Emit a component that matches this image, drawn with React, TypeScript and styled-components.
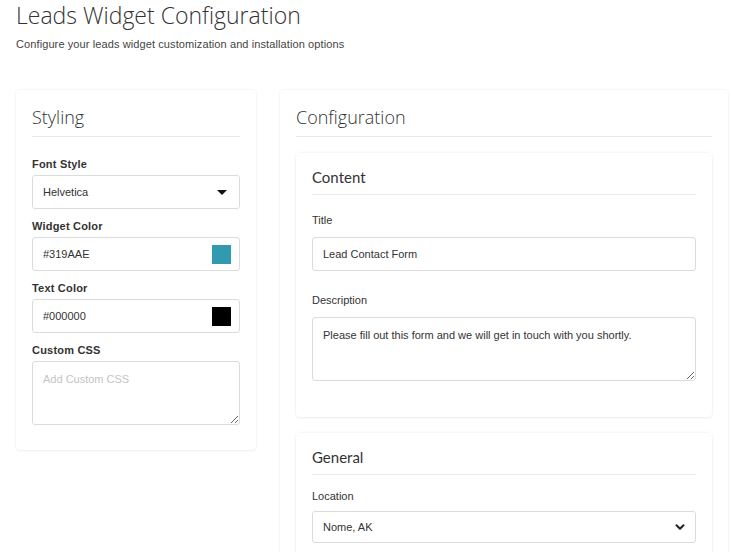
import React from 'react';
import styled, { createGlobalStyle } from 'styled-components';
import { ChevronDown } from 'lucide-react';

const GlobalStyle = createGlobalStyle`
  body {
    margin: 0;
    background: #fff;
    font-family: 'Liberation Sans', Arial, sans-serif;
    color: #333;
  }
`;

const Page = styled.div`
  padding: 0 4px 0 16px;
`;

const PageTitle = styled.h1`
  margin: 0;
  padding-top: 2px;
  font-family: 'Open Sans', sans-serif;
  font-weight: 300;
  font-size: 23px;
  line-height: 26px;
  color: #333;
`;

const PageSubtitle = styled.p`
  margin: 9px 0 0;
  font-size: 11px;
  line-height: 14px;
  letter-spacing: 0.1px;
  color: #444;
`;

const Columns = styled.div`
  display: flex;
  align-items: flex-start;
  gap: 24px;
  margin-top: 39px;
`;

const Card = styled.section<{ $width?: number; $open?: boolean }>`
  background: #fff;
  border-radius: 4px;
  box-shadow: 0 0 3px rgba(0, 0, 0, 0.08), 0 1px 2px rgba(0, 0, 0, 0.04);
  padding: 16px 16px ${(p) => (p.$open ? '0' : '25px')};
  ${(p) => (p.$width ? `width: ${p.$width}px;` : 'flex: 1;')}
  box-sizing: border-box;
  ${(p) => (p.$open ? 'min-height: 480px;' : '')}
`;

const SubCard = styled.section`
  background: #fff;
  border-radius: 4px;
  box-shadow: 0 0 3px rgba(0, 0, 0, 0.09), 0 1px 2px rgba(0, 0, 0, 0.04);
  padding: 16px 16px 14px;
  margin-bottom: 16px;
`;

const CardTitle = styled.h2`
  margin: 0;
  padding-bottom: 8px;
  border-bottom: 1px solid #eaeaea;
  font-family: 'Open Sans', sans-serif;
  font-weight: 300;
  font-size: 18px;
  line-height: 22px;
  color: #333;
`;

const SubTitle = styled.h3`
  margin: 0;
  padding-bottom: 8px;
  border-bottom: 1px solid #eaeaea;
  font-family: 'Lato', sans-serif;
  font-weight: 400;
  font-size: 15px;
  line-height: 17px;
  color: #333;
`;

const Fields = styled.div<{ $top: number }>`
  margin-top: ${(p) => p.$top}px;
`;

const Group = styled.div<{ $gap: number }>`
  margin-bottom: ${(p) => p.$gap}px;
  &:last-child {
    margin-bottom: 0;
  }
`;

const Label = styled.label<{ $bold?: boolean; $gap: number }>`
  display: block;
  font-size: 11px;
  line-height: 14px;
  font-weight: ${(p) => (p.$bold ? 700 : 400)};
  letter-spacing: ${(p) => (p.$bold ? '0.2px' : '0')};
  color: #333;
  margin-bottom: ${(p) => p.$gap}px;
`;

const Box = styled.div<{ $height?: number }>`
  position: relative;
  display: flex;
  align-items: center;
  justify-content: space-between;
  height: ${(p) => p.$height ?? 34}px;
  box-sizing: border-box;
  border: 1px solid #dcdcdc;
  border-radius: 3px;
  padding: 0 8px 0 10px;
  font-size: 11px;
  color: #333;
  background: #fff;
`;

const TextInput = styled.input`
  display: block;
  width: 100%;
  height: 34px;
  box-sizing: border-box;
  border: 1px solid #dcdcdc;
  border-radius: 3px;
  padding: 0 10px;
  font-family: 'Liberation Sans', Arial, sans-serif;
  font-size: 11px;
  color: #333;
  outline: none;
  flex: 1;
`;

const BareInput = styled.input`
  border: none;
  outline: none;
  padding: 0;
  flex: 1;
  font-family: 'Liberation Sans', Arial, sans-serif;
  font-size: 11px;
  color: #333;
  background: transparent;
`;

const TextArea = styled.textarea`
  display: block;
  width: 100%;
  height: 64px;
  box-sizing: border-box;
  border: 1px solid #dcdcdc;
  border-radius: 3px;
  padding: 10px 10px;
  font-family: 'Liberation Sans', Arial, sans-serif;
  font-size: 11px;
  line-height: 14px;
  color: #333;
  outline: none;
  resize: vertical;
  &::placeholder {
    color: #c4c4c4;
  }
`;

const Swatch = styled.span<{ $color: string }>`
  width: 19px;
  height: 19px;
  background: ${(p) => p.$color};
`;

const Caret = styled.span`
  width: 0;
  height: 0;
  margin-right: 4px;
  border-left: 5px solid transparent;
  border-right: 5px solid transparent;
  border-top: 5px solid #111;
`;

const Spacer = styled.div<{ $h: number }>`
  height: ${(p) => p.$h}px;
`;

const ColorField = ({ value, color }: { value: string; color: string }) => (
  <Box>
    <BareInput defaultValue={value} readOnly />
    <Swatch $color={color} />
  </Box>
);

export default function App() {
  return (
    <>
      <GlobalStyle />
      <Page>
        <PageTitle>Leads Widget Configuration</PageTitle>
        <PageSubtitle>Configure your leads widget customization and installation options</PageSubtitle>
        <Columns>
          <Card $width={240}>
            <CardTitle>Styling</CardTitle>
            <Fields $top={20}>
              <Group $gap={10}>
                <Label $bold $gap={4}>Font Style</Label>
                <Box>
                  <span>Helvetica</span>
                  <Caret />
                </Box>
              </Group>
              <Group $gap={10}>
                <Label $bold $gap={4}>Widget Color</Label>
                <ColorField value="#319AAE" color="#319AAE" />
              </Group>
              <Group $gap={10}>
                <Label $bold $gap={4}>Text Color</Label>
                <ColorField value="#000000" color="#000000" />
              </Group>
              <Group $gap={10}>
                <Label $bold $gap={4}>Custom CSS</Label>
                <TextArea placeholder="Add Custom CSS" />
              </Group>
            </Fields>
          </Card>
          <Card $open>
            <CardTitle>Configuration</CardTitle>
            <Fields $top={16}>
              <SubCard>
                <SubTitle>Content</SubTitle>
                <Fields $top={18}>
                  <Group $gap={22}>
                    <Label $gap={10}>Title</Label>
                    <TextInput defaultValue="Lead Contact Form" readOnly />
                  </Group>
                  <Group $gap={22}>
                    <Label $gap={10}>Description</Label>
                    <TextArea defaultValue="Please fill out this form and we will get in touch with you shortly." />
                  </Group>
                </Fields>
                <Spacer $h={22} />
              </SubCard>
              <SubCard>
                <SubTitle>General</SubTitle>
                <Fields $top={14}>
                  <Group $gap={16}>
                    <Label $gap={8}>Location</Label>
                    <Box $height={32}>
                      <span>Nome, AK</span>
                      <ChevronDown size={14} strokeWidth={3.5} color="#222" />
                    </Box>
                  </Group>
                </Fields>
              </SubCard>
            </Fields>
          </Card>
        </Columns>
      </Page>
    </>
  );
}
